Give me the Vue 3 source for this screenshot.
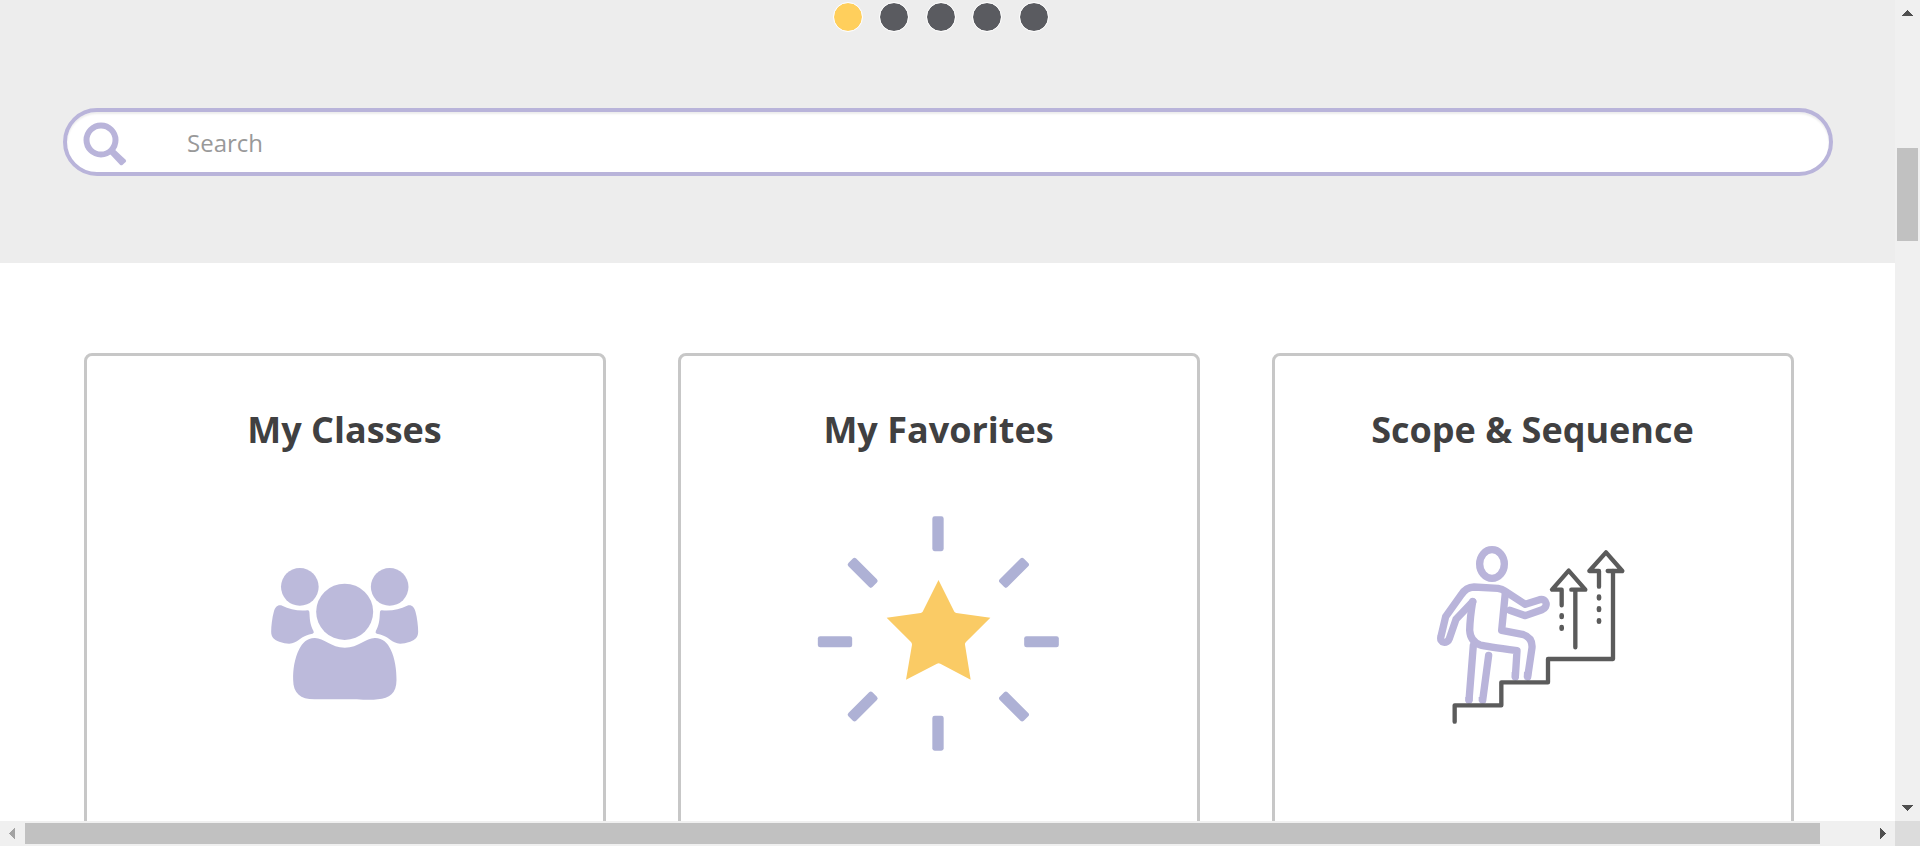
<script setup>
const dots = [true, false, false, false, false]
const cards = [
  { id: 'classes', title: 'My Classes' },
  { id: 'favorites', title: 'My Favorites' },
  { id: 'scope', title: 'Scope & Sequence' },
]
</script>

<template>
  <div class="window">
    <main class="content">
      <section class="hero">
        <div class="dots">
          <button v-for="(on, i) in dots" :key="i" class="dot" :class="{ active: on }" :aria-label="`Slide ${i + 1}`"></button>
        </div>
        <div class="search">
          <svg class="glass" viewBox="0 0 132 132" aria-hidden="true">
            <circle cx="54" cy="54" r="43.5" fill="none" stroke="#b9b4da" stroke-width="18" />
            <path d="M87 75L128 113Q131 117 128 120L119 128Q115 131 111 128L78 93Z" fill="#b9b4da" />
          </svg>
          <input type="text" placeholder="Search" />
        </div>
      </section>

      <section class="cards">
        <article v-for="c in cards" :key="c.id" class="card">
          <h2>{{ c.title }}</h2>
          <svg class="icon" viewBox="0 0 840 780" aria-hidden="true">
            <g v-if="c.id === 'classes'" transform="translate(165.500 166)" fill="#bcbadb">
              <circle cx="119" cy="94.500" r="56.500" />
              <circle cx="388.500" cy="94.500" r="56.500" />
              <ellipse cx="253.500" cy="169.500" rx="85.500" ry="84.500" />
              <path d="M66 151C52 147 45 156 41 169C36 187 33 212 33 229C33 246 43 254 57 259C76 265 91 268 104 261C122 252 127 240 157 235Q163 233 160 227C151 211 149 196 148 175Q148 164 142 165C114 168 88 162 66 151Z" />
              <path d="M66 151C52 147 45 156 41 169C36 187 33 212 33 229C33 246 43 254 57 259C76 265 91 268 104 261C122 252 127 240 157 235Q163 233 160 227C151 211 149 196 148 175Q148 164 142 165C114 168 88 162 66 151Z" transform="translate(507 0) scale(-1 1)" />
              <path d="M163 248C190 247 212 277 254 277C296 277 318 247 345 248C368 249 382 262 391 282C405 310 409 345 409 374C409 414 388 429 353 432Q330 435 290 432H163C120 432 99 413 99 374C98 344 103 310 117 282C127 262 140 249 163 248Z" />
            </g>

            <g v-else-if="c.id === 'favorites'" transform="translate(3 1)">
              <g fill="#aeb1d5">
                <rect x="397" y="48" width="34" height="104.500" rx="7" />
                <rect x="397" y="646" width="34" height="105" rx="7" />
                <rect x="53.500" y="407.500" width="103" height="33.500" rx="7" />
                <rect x="672.500" y="407.500" width="104" height="33.500" rx="7" />
                <rect x="-51" y="-16.500" width="102" height="33" rx="7" transform="translate(188 217.500) rotate(45)" />
                <rect x="-51" y="-16.500" width="102" height="33" rx="7" transform="translate(642 217.500) rotate(-45)" />
                <rect x="-51" y="-16.500" width="102" height="33" rx="7" transform="translate(188 618.500) rotate(-45)" />
                <rect x="-51" y="-16.500" width="102" height="33" rx="7" transform="translate(642 618.500) rotate(45)" />
              </g>
              <path d="M415.500 239L463 334Q465 337 469 338L571 352L498 425Q494 428 495 433L512 538L421 490Q416 487 411 490L318 538L336 433Q336 428 333 425L260 352L362 338Q366 337 368 334Z" fill="#facb65" />
            </g>

            <g v-else transform="translate(81 91)" fill="none" stroke-linecap="round" stroke-linejoin="round">
              <g stroke="#b9b4da" stroke-width="22">
                <ellipse cx="216" cy="101" rx="37" ry="43" />
                <path d="M158 214L108 267L88 325C83 341 57 340 63 318L77 259L124 193Q138 171 162 170L234 174Q246 176 256 183L316 222L359 208C381 203 386 231 366 238L316 256L269 240" />
                <path d="M158 214Q150 262 149 300Q151 334 181 344Q195 348 291 361L286 440" />
                <path d="M256 187L245 300L307 312Q338 321 336 352L323 440" />
                <path d="M160 345L147 510M206 375L188 510" />
                <path d="M286 425V442M323 425L322 442M147 500V513M187 500V513" stroke-linecap="butt" />
              </g>
              <g stroke="#5b5b5b" stroke-width="13">
                <path d="M104 574V525H244V456H384V386H579V122H563" />
                <path d="M537 169V122H508L558 66L607 122H579" />
                <path d="M466 351V178H454M466 178H496L446 121L396 178H425V225" />
                <path d="M425 255V260M425 290V295M537 199V204M537 234V239M537 270V274" stroke-width="14" />
              </g>
            </g>
          </svg>
        </article>
      </section>
    </main>

    <div class="vbar">
      <svg viewBox="0 0 25 25" class="arrow"><path d="M12.500 10L18 16H7Z" fill="#505050" /></svg>
      <div class="vthumb"></div>
      <svg viewBox="0 0 25 25" class="arrow end"><path d="M12.500 15L18 9H7Z" fill="#505050" /></svg>
    </div>
    <div class="hbar">
      <svg viewBox="0 0 25 25" class="arrow"><path d="M9 12.500L15 7V18Z" fill="#a3a3a3" /></svg>
      <div class="hthumb"></div>
      <svg viewBox="0 0 25 25" class="arrow end"><path d="M16 12.500L10 7V18Z" fill="#505050" /></svg>
    </div>
    <div class="corner"></div>
  </div>
</template>

<style>
body {
  margin: 0;
  overflow: hidden;
}
</style>

<style scoped>
.window {
  display: grid;
  grid-template: 821px 25px / 1895px 25px;
  width: 1920px;
  height: 846px;
  overflow: hidden;
  background: #fff;
  font-family: "Open Sans", "Noto Sans", sans-serif;
}
.content {
  overflow: hidden;
}
.hero {
  box-sizing: border-box;
  height: 263px;
  padding: 2px 62px 0 63px;
  background: #ededed;
}
.dots {
  display: flex;
  justify-content: center;
  gap: 16.5px;
  width: 1755px;
}
.dot {
  box-sizing: border-box;
  width: 30px;
  height: 30px;
  padding: 0;
  border: 1px solid #fff;
  border-radius: 50%;
  background: #5a5b60;
  background-clip: padding-box;
}
.dot.active {
  background-color: #ffcf5c;
}
.search {
  box-sizing: border-box;
  display: flex;
  align-items: center;
  height: 68px;
  margin-top: 76px;
  padding-left: 16px;
  border: 4px solid #b9b4da;
  border-radius: 34px;
  background: #fff;
  box-shadow: inset 0 2px 2px rgba(0, 0, 0, 0.075);
}
.glass {
  flex: none;
  width: 44px;
  height: 44px;
  margin-top: 4px;
}
.search input {
  flex: 1;
  height: 50px;
  margin-left: 60px;
  padding: 0;
  border: 0;
  outline: 0;
  background: transparent;
  font: 24px "Open Sans", "Noto Sans", sans-serif;
}
.search input::placeholder {
  color: #999;
  opacity: 1;
}
.cards {
  display: grid;
  grid-template-columns: repeat(3, 522px);
  gap: 72px;
  padding: 90px 0 0 84px;
}
.card {
  box-sizing: border-box;
  display: flex;
  flex-direction: column;
  align-items: center;
  height: 560px;
  padding-top: 49px;
  border: 3px solid #c7c7c7;
  border-radius: 8px;
}
.card h2 {
  margin: 0 0 46px;
  padding-right: 1px;
  color: #404041;
  font-size: 36px;
  font-weight: 700;
  line-height: 49px;
}
.icon {
  width: 280px;
  height: 260px;
}
.vbar,
.hbar {
  display: flex;
  background: #f0f0f0;
}
.vbar {
  flex-direction: column;
  align-items: center;
}
.hbar {
  align-items: center;
}
.arrow {
  flex: none;
  width: 25px;
  height: 25px;
  shape-rendering: crispEdges;
}
.vbar .end {
  margin-top: auto;
}
.hbar .end {
  margin-left: auto;
}
.vthumb {
  width: 21px;
  height: 93px;
  margin-top: 123px;
  background: #c1c1c1;
}
.hthumb {
  width: 1795px;
  height: 21px;
  background: #c1c1c1;
}
.corner {
  background: #dcdcdc;
}
</style>
